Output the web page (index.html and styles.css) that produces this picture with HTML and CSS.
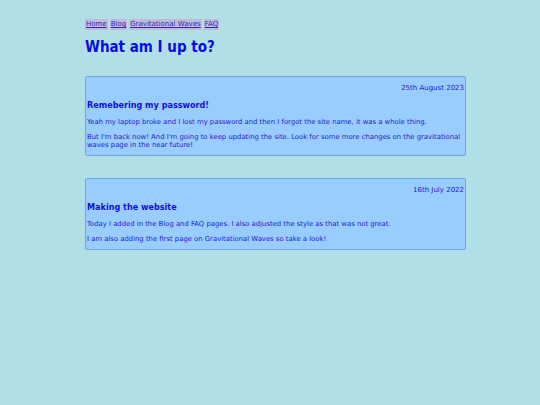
FILE: index.html
```html
<!DOCTYPE html>
<html>
<head>
<meta charset="utf-8">
<title>Blog</title>
<link rel="stylesheet" href="styles.css">
</head>
<body>
<div class="page">
  <nav class="nav">
    <a href="#" class="nav-link">Home</a>
    <a href="#" class="nav-link">Blog</a>
    <a href="#" class="nav-link">Gravitational Waves</a>
    <a href="#" class="nav-link">FAQ</a>
  </nav>
  <h1 class="title">What am I up to?</h1>
  <article class="post">
    <p class="date">25th August 2023</p>
    <h2 class="post-title">Remebering my password!</h2>
    <p class="text">Yeah my laptop broke and I lost my password and then I forgot the site name, it was a whole thing.</p>
    <p class="text">But I'm back now! And I'm going to keep updating the site. Look for some more changes on the gravitational waves page in the near future!</p>
  </article>
  <article class="post">
    <p class="date">16th July 2022</p>
    <h2 class="post-title">Making the website</h2>
    <p class="text">Today I added in the Blog and FAQ pages. I also adjusted the style as that was not great.</p>
    <p class="text">I am also adding the first page on Gravitational Waves so take a look!</p>
  </article>
</div>
</body>
</html>
```
FILE: styles.css
```css
html, body {
  margin: 0;
  padding: 0;
  background: #b0e0e6;
  font-family: "DejaVu Sans", Verdana, sans-serif;
  color: #2222cc;
}
.page {
  width: 381px;
  margin-left: 85px;
  padding-top: 19px;
}
.nav {
  display: flex;
  gap: 2px;
  font-size: 7px;
  line-height: 11px;
}
.nav-link {
  background: #c2badc;
  color: #2a2ab0;
  padding: 0 1px;
}
.title {
  font-family: "DejaVu Sans Condensed", "DejaVu Sans", sans-serif;
  font-stretch: condensed;
  font-size: 15px;
  color: #0a0ae8;
  margin: 8px 0 0 0;
  line-height: 18px;
}
.post {
  background: #99ccff;
  border: 1px solid #6aa6f0;
  border-radius: 2px;
  margin-top: 22px;
  margin-bottom: 22px;
  padding: 0 1px;
}
.title + .post {
  margin-top: 20px;
}
.date {
  text-align: right;
  font-size: 7px;
  margin: 7px 0 0;
}
.post-title {
  font-family: "DejaVu Sans Condensed", "DejaVu Sans", sans-serif;
  font-stretch: condensed;
  font-size: 9px;
  color: #1010d8;
  margin: 8px 0 8px;
}
.text {
  font-size: 6.85px;
  margin: 0 0 7px;
  line-height: 8px;
}
.text:last-child {
  margin-bottom: 6px;
}
```
